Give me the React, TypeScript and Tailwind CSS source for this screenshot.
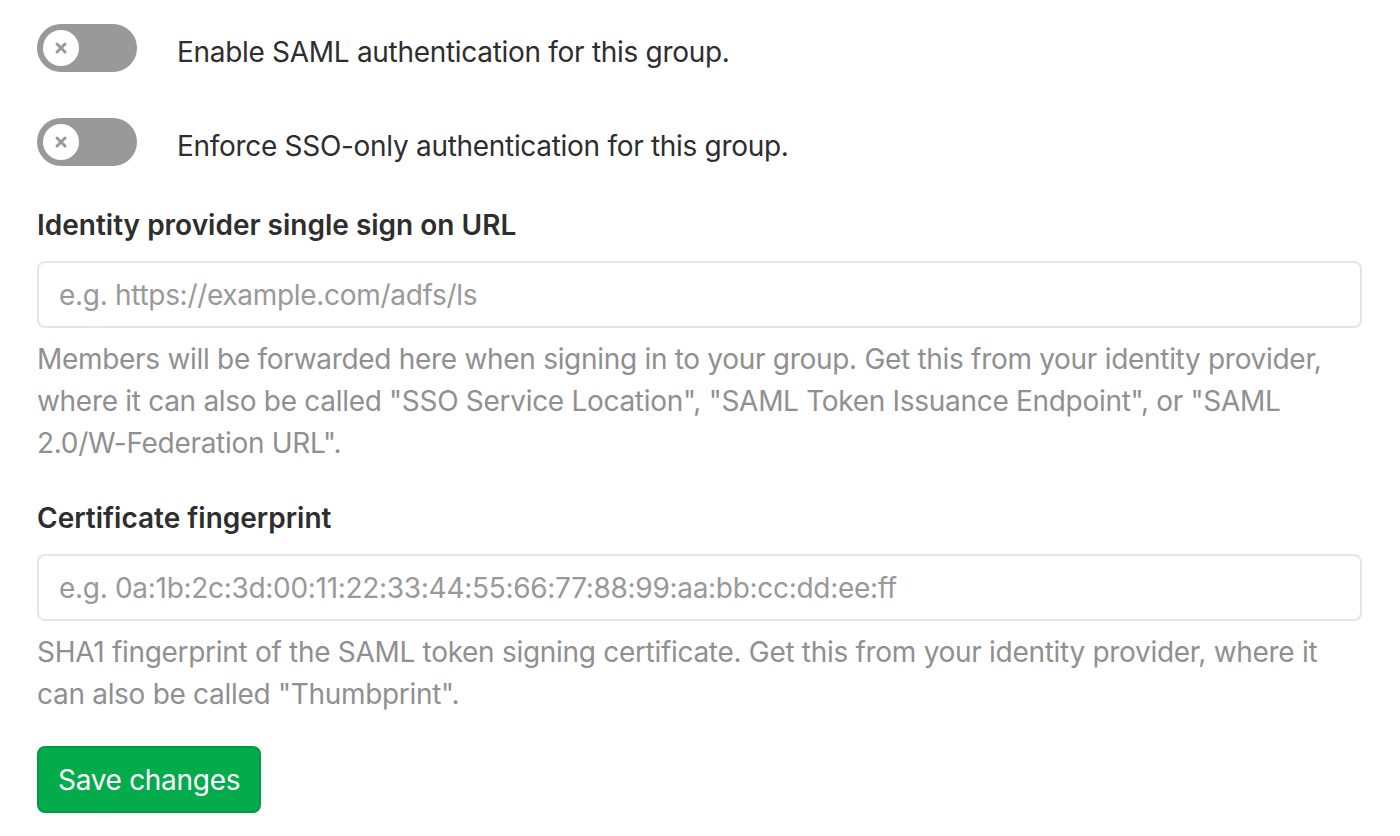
import React, { useState } from "react";

const Toggle: React.FC<{ on: boolean; onChange: () => void }> = ({ on, onChange }) => (
  <button
    type="button"
    onClick={onChange}
    className={`relative flex h-12 w-[100px] shrink-0 items-center rounded-full px-[6px] ${
      on ? "justify-end bg-[#1aaa55]" : "justify-start bg-[#999999]"
    }`}
  >
    <span className="flex h-9 w-9 items-center justify-center rounded-full bg-white">
      <svg width="14" height="14" viewBox="0 0 14 14" className="text-[#999999]">
        <path d="M3 3 L11 11 M11 3 L3 11" stroke="currentColor" strokeWidth="3" strokeLinecap="round" />
      </svg>
    </span>
  </button>
);

export default function App() {
  const [saml, setSaml] = useState(false);
  const [sso, setSso] = useState(false);

  return (
    <div className="min-h-screen bg-white px-[37px] pt-6 text-[28px] leading-[42px] tracking-[-0.3px] text-[#2e2e2e] [font-family:Inter,'Liberation_Sans',Arial,sans-serif]">
      <div className="w-[1325px]">
        {/* Toggles */}
        <div className="flex items-center gap-10">
          <Toggle on={saml} onChange={() => setSaml(!saml)} />
          <span className="pt-2 leading-[40px]">Enable SAML authentication for this group.</span>
        </div>
        <div className="mt-[46px] flex items-center gap-10">
          <Toggle on={sso} onChange={() => setSso(!sso)} />
          <span className="pt-2 leading-[40px]">Enforce SSO-only authentication for this group.</span>
        </div>

        {/* SSO URL */}
        <div className="mt-[38px]">
          <label className="block font-semibold tracking-normal">Identity provider single sign on URL</label>
          <input
            type="text"
            placeholder="e.g. https://example.com/adfs/ls"
            className="mt-[15px] block h-[67px] w-full rounded-lg border-2 border-[#e5e5e5] px-[20px] text-[#2e2e2e] outline-none placeholder:text-[#999999] focus:border-[#73afea]"
          />
          <p className="mt-[10px] text-[#909090]">
            Members will be forwarded here when signing in to your group. Get this from your identity provider,
            where it can also be called "SSO Service Location", "SAML Token Issuance Endpoint", or "SAML
            2.0/W-Federation URL".
          </p>
        </div>

        {/* Fingerprint */}
        <div className="mt-[33px]">
          <label className="block font-semibold tracking-normal">Certificate fingerprint</label>
          <input
            type="text"
            placeholder="e.g. 0a:1b:2c:3d:00:11:22:33:44:55:66:77:88:99:aa:bb:cc:dd:ee:ff"
            className="mt-[15px] block h-[67px] w-full rounded-lg border-2 border-[#e5e5e5] px-[20px] text-[#2e2e2e] outline-none placeholder:text-[#999999] focus:border-[#73afea]"
          />
          <p className="mt-[10px] text-[#909090]">
            SHA1 fingerprint of the SAML token signing certificate. Get this from your identity provider, where it
            can also be called "Thumbprint".
          </p>
        </div>

        <button
          type="submit"
          className="mt-[31px] h-[67px] rounded-lg border-2 border-[#019a43] bg-[#03ab4b] px-[19px] text-white"
        >
          Save changes
        </button>
      </div>
    </div>
  );
}
